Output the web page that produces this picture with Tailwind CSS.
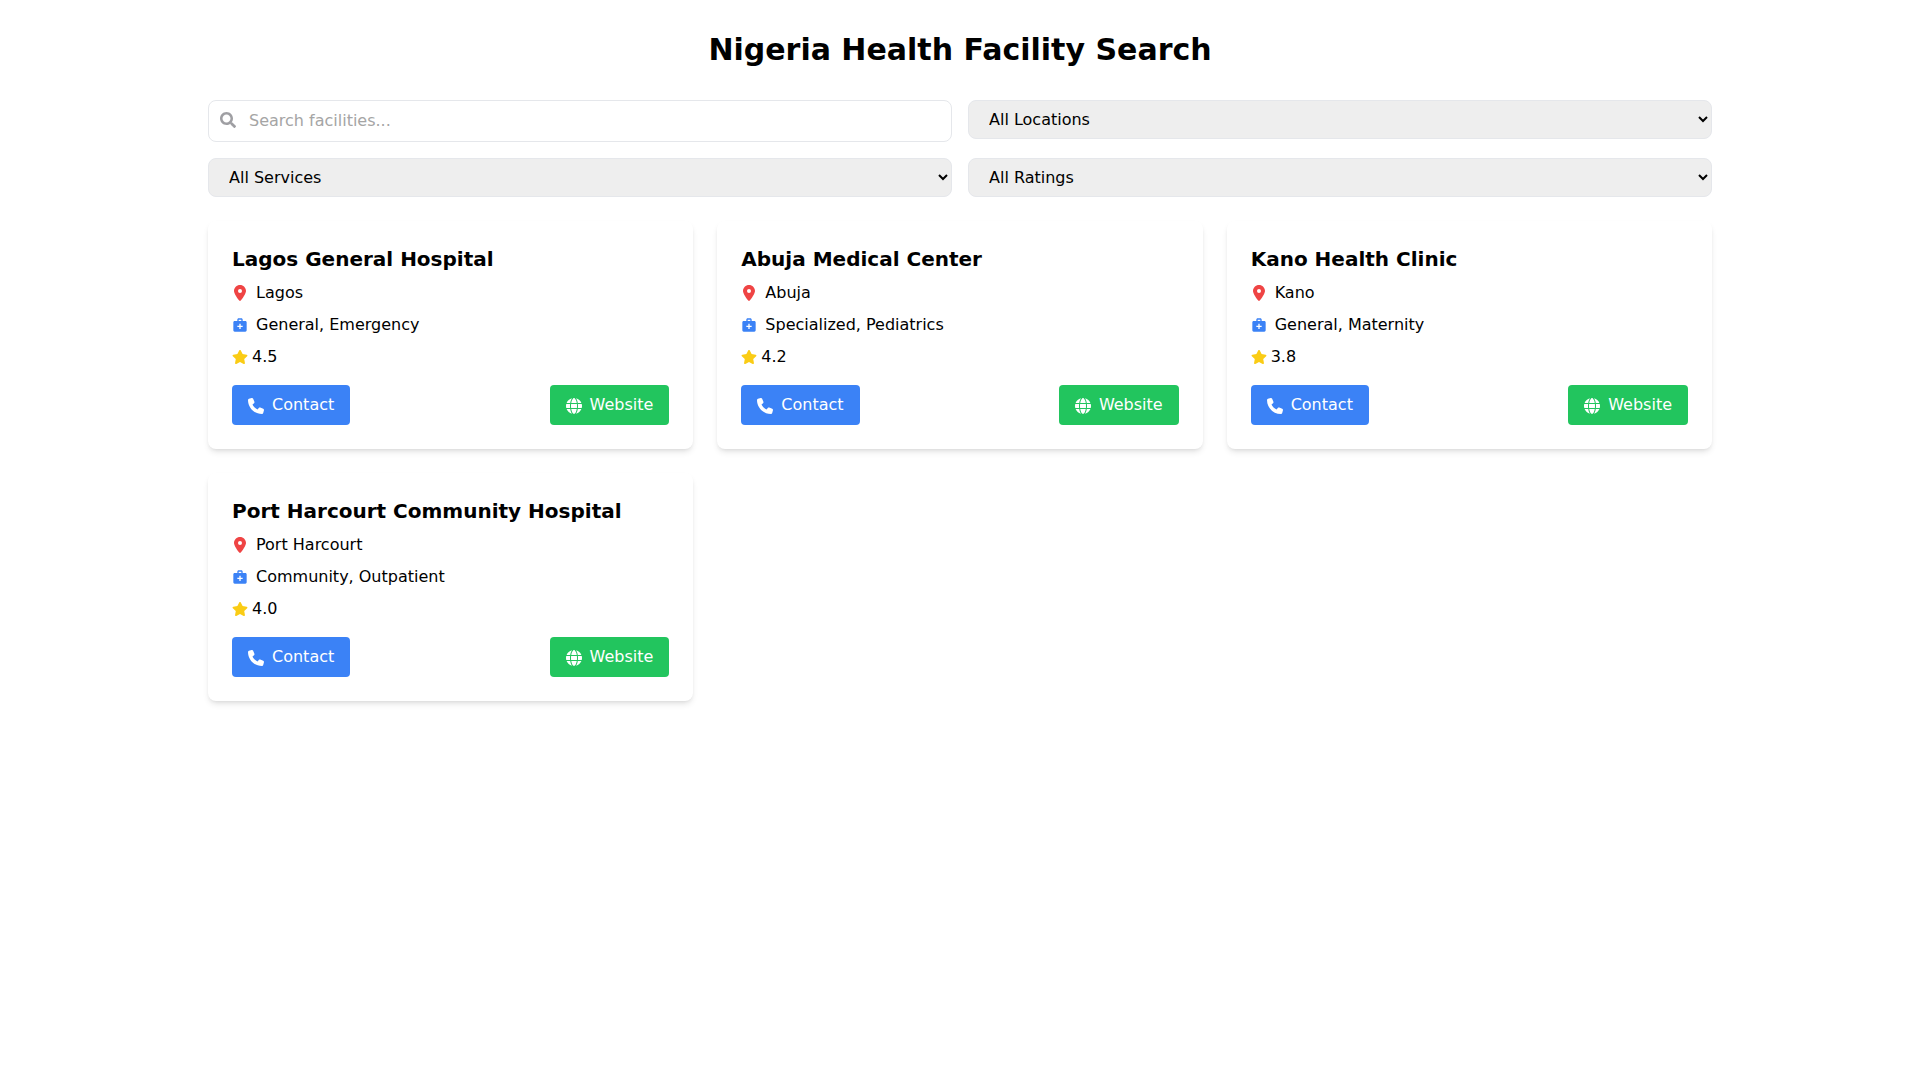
<!DOCTYPE html>
<html lang="en">
<head>
    <meta charset="UTF-8">
    <meta name="viewport" content="width=device-width, initial-scale=1.0">
    <title>Nigeria Health Facility Search</title>
    <script src="https://cdn.jsdelivr.net/npm/@tailwindcss/browser@4"></script>
</head>

<body class="bg-white text-black font-['DejaVu_Sans',sans-serif]">
    <svg class="hidden">
        <symbol id="icon-search" viewBox="0 0 512 512"><path d="M505 442.700L405.300 343c-4.500-4.500-10.600-7-17-7H372c27.600-35.300 44-79.700 44-128C416 93.100 322.900 0 208 0S0 93.100 0 208s93.100 208 208 208c48.300 0 92.700-16.400 128-44v16.300c0 6.400 2.500 12.500 7 17l99.700 99.700c9.400 9.400 24.600 9.400 33.900 0l28.300-28.300c9.400-9.400 9.400-24.600.1-34zM208 336c-70.700 0-128-57.200-128-128 0-70.700 57.200-128 128-128 70.700 0 128 57.200 128 128 0 70.700-57.200 128-128 128z"/></symbol>
        <symbol id="icon-pin" viewBox="0 0 384 512"><path d="M215.700 499.200C267 435 384 279.400 384 192C384 86 298 0 192 0S0 86 0 192c0 87.400 117 243 168.300 307.200c12.300 15.300 35.100 15.300 47.400 0zM192 128a64 64 0 1 1 0 128 64 64 0 1 1 0-128z"/></symbol>
        <symbol id="icon-services" viewBox="0 0 24 24"><path d="M20 6h-4V4c0-1.100-.9-2-2-2h-4c-1.100 0-2 .9-2 2v2H4c-1.100 0-2 .9-2 2v12c0 1.100.9 2 2 2h16c1.100 0 2-.9 2-2V8c0-1.100-.9-2-2-2zM10 4h4v2h-4V4zm6 11h-3v3h-2v-3H8v-2h3v-3h2v3h3v2z"/></symbol>
        <symbol id="icon-star" viewBox="0 0 576 512"><path d="M259.300 17.800L194 150.200 47.900 171.500c-26.200 3.800-36.700 36.100-17.700 54.600l105.700 103-25 145.500c-4.500 26.300 23.200 46 46.400 33.700L288 439.600l130.700 68.700c23.200 12.200 50.900-7.400 46.400-33.700l-25-145.500 105.700-103c19-18.500 8.500-50.800-17.700-54.600L382 150.200 316.700 17.800c-11.700-23.600-45.600-23.900-57.400 0z"/></symbol>
        <symbol id="icon-phone" viewBox="0 0 512 512"><path d="M164.900 24.600c-7.700-18.600-28-28.500-47.400-23.200l-88 24C12.100 30.200 0 46 0 64C0 311.400 200.600 512 448 512c18 0 33.800-12.100 38.600-29.500l24-88c5.300-19.400-4.600-39.700-23.200-47.400l-96-40c-16.300-6.800-35.200-2.100-46.300 11.600L304.700 368C234.300 334.700 177.300 277.700 144 207.300L193.300 167c13.700-11.200 18.400-30 11.600-46.300l-40-96z"/></symbol>
        <symbol id="icon-globe" viewBox="0 0 512 512"><path d="M352 256c0 22.200-1.200 43.600-3.300 64H163.300c-2.200-20.400-3.300-41.800-3.300-64s1.200-43.600 3.300-64H348.700c2.200 20.400 3.300 41.800 3.300 64zm28.800-64H503.900c5.300 20.500 8.100 41.900 8.100 64s-2.800 43.500-8.100 64H380.800c2.100-20.600 3.200-42 3.200-64s-1.100-43.400-3.200-64zm112.600-32H376.700c-10-63.900-29.800-117.400-55.300-151.600c78.300 20.700 142 77.500 171.900 151.600zm-149.100 0H167.700c6.100-36.400 15.500-68.600 27-94.700c10.500-23.600 22.200-40.700 33.500-51.500C239.400 3.200 248.700 0 256 0s16.600 3.200 27.800 13.800c11.300 10.800 23 27.900 33.500 51.500c11.600 26 20.900 58.200 27 94.700zm-209 0H18.600C48.600 85.900 112.200 29.100 190.600 8.400C165.100 42.600 145.300 96.100 135.300 160zM8.100 192H131.200c-2.100 20.600-3.200 42-3.200 64s1.100 43.400 3.200 64H8.100C2.800 299.500 0 278.100 0 256s2.800-43.500 8.100-64zM194.700 446.600c-11.600-26-20.900-58.200-27-94.600H344.300c-6.100 36.400-15.500 68.600-27 94.600c-10.500 23.600-22.200 40.700-33.500 51.500C272.600 508.800 263.300 512 256 512s-16.600-3.200-27.800-13.800c-11.300-10.800-23-27.900-33.500-51.500zM135.300 352c10 63.900 29.800 117.400 55.300 151.600C112.200 482.900 48.600 426.100 18.600 352H135.300zm358.100 0c-30 74.100-93.600 130.900-171.900 151.600c25.500-34.200 45.200-87.700 55.300-151.600H493.400z"/></symbol>
    </svg>

    <main class="container mx-auto px-4 py-8">
        <h1 class="text-3xl font-bold mb-8 text-center">Nigeria Health Facility Search</h1>

        <form class="grid grid-cols-1 md:grid-cols-2 gap-4 mb-6 items-start">
            <div class="relative">
                <svg class="absolute left-3 top-3 size-4 text-[#9f9fa3] fill-current"><use href="#icon-search"/></svg>
                <input type="text" id="search" aria-label="Search facilities" placeholder="Search facilities..." class="block w-full pl-10 pr-4 py-2 border border-gray-200 rounded-lg placeholder:text-[#a5a5a5]">
            </div>
            <select id="location" aria-label="Location" class="w-full px-4 py-2 border border-gray-200 rounded-lg bg-[#eeeeee]">
                <option>All Locations</option>
                <option>Lagos</option>
                <option>Abuja</option>
                <option>Kano</option>
                <option>Port Harcourt</option>
            </select>
            <select id="service" aria-label="Service" class="w-full px-4 py-2 border border-gray-200 rounded-lg bg-[#eeeeee]">
                <option>All Services</option>
                <option>General</option>
                <option>Emergency</option>
                <option>Specialized</option>
                <option>Pediatrics</option>
            </select>
            <select id="rating" aria-label="Rating" class="w-full px-4 py-2 border border-gray-200 rounded-lg bg-[#eeeeee]">
                <option>All Ratings</option>
                <option>4+ Stars</option>
                <option>3+ Stars</option>
            </select>
        </form>

        <div id="facilities" class="grid grid-cols-1 md:grid-cols-2 lg:grid-cols-3 gap-6"></div>
    </main>

    <script>
        const facilities = [
            { name: 'Lagos General Hospital', location: 'Lagos', services: ['General', 'Emergency'], rating: 4.5 },
            { name: 'Abuja Medical Center', location: 'Abuja', services: ['Specialized', 'Pediatrics'], rating: 4.2 },
            { name: 'Kano Health Clinic', location: 'Kano', services: ['General', 'Maternity'], rating: 3.8 },
            { name: 'Port Harcourt Community Hospital', location: 'Port Harcourt', services: ['Community', 'Outpatient'], rating: 4.0 }
        ];

        document.getElementById('facilities').innerHTML = facilities.map(facility => `
            <div class="bg-white rounded-lg shadow-md p-6">
                <h2 class="text-xl font-bold mb-2">${facility.name}</h2>
                <div class="flex items-center mb-2">
                    <svg class="size-4 mr-2 text-[#ef4444] fill-current"><use href="#icon-pin"/></svg>
                    <span>${facility.location}</span>
                </div>
                <div class="flex items-center mb-2">
                    <svg class="size-4 mr-2 text-[#3b82f6] fill-current"><use href="#icon-services"/></svg>
                    <span>${facility.services.join(', ')}</span>
                </div>
                <div class="flex items-center mb-4">
                    <svg class="size-4 mr-1 text-[#facc15] fill-current"><use href="#icon-star"/></svg>
                    <span>${facility.rating.toFixed(1)}</span>
                </div>
                <div class="flex justify-between">
                    <button type="button" class="bg-[#3b82f6] text-white px-4 py-2 rounded hover:bg-blue-600"><svg class="inline size-4 mr-2 fill-current"><use href="#icon-phone"/></svg>Contact</button>
                    <a href="#" class="bg-[#22c55e] text-white px-4 py-2 rounded hover:bg-green-600"><svg class="inline size-4 mr-2 fill-current"><use href="#icon-globe"/></svg>Website</a>
                </div>
            </div>
        `).join('');
    </script>
</body>

</html>
